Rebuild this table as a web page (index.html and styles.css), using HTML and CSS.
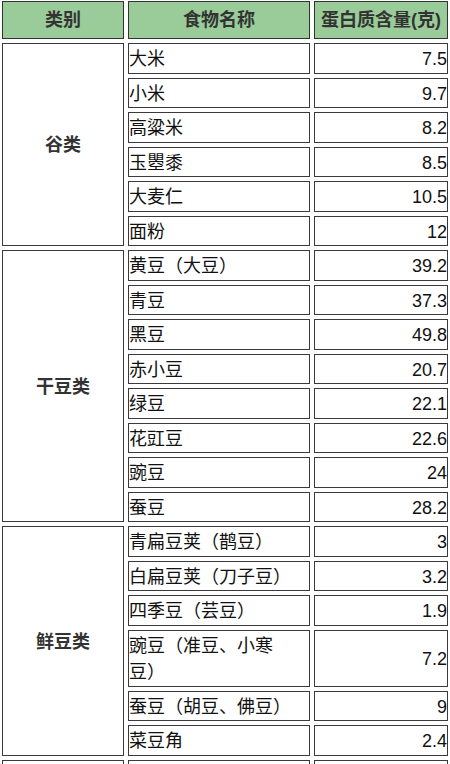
FILE: index.html
```html
<!DOCTYPE html>
<html lang="zh">
<head>
<meta charset="utf-8">
<title>蛋白质含量</title>
<link rel="stylesheet" href="styles.css">
</head>
<body>
<table class="protein">
  <thead>
    <tr><th class="h-cat">类别</th><th class="h-name">食物名称</th><th class="h-val">蛋白质含量(克)</th></tr>
  </thead>
  <tbody>
    <tr><td class="cat" rowspan="6">谷类</td><td class="name">大米</td><td class="val">7.5</td></tr>
    <tr><td class="name">小米</td><td class="val">9.7</td></tr>
    <tr><td class="name">高粱米</td><td class="val">8.2</td></tr>
    <tr><td class="name">玉瞾黍</td><td class="val">8.5</td></tr>
    <tr><td class="name">大麦仁</td><td class="val">10.5</td></tr>
    <tr><td class="name">面粉</td><td class="val">12</td></tr>
    <tr><td class="cat" rowspan="8">干豆类</td><td class="name">黄豆（大豆）</td><td class="val">39.2</td></tr>
    <tr><td class="name">青豆</td><td class="val">37.3</td></tr>
    <tr><td class="name">黑豆</td><td class="val">49.8</td></tr>
    <tr><td class="name">赤小豆</td><td class="val">20.7</td></tr>
    <tr><td class="name">绿豆</td><td class="val">22.1</td></tr>
    <tr><td class="name">花豇豆</td><td class="val">22.6</td></tr>
    <tr><td class="name">豌豆</td><td class="val">24</td></tr>
    <tr><td class="name">蚕豆</td><td class="val">28.2</td></tr>
    <tr><td class="cat" rowspan="6">鲜豆类</td><td class="name">青扁豆荚（鹊豆）</td><td class="val">3</td></tr>
    <tr><td class="name">白扁豆荚（刀子豆）</td><td class="val">3.2</td></tr>
    <tr><td class="name">四季豆（芸豆）</td><td class="val">1.9</td></tr>
    <tr><td class="name">豌豆（准豆、小寒豆）</td><td class="val">7.2</td></tr>
    <tr><td class="name">蚕豆（胡豆、佛豆）</td><td class="val">9</td></tr>
    <tr><td class="name">菜豆角</td><td class="val">2.4</td></tr>
    <tr class="next"><td class="cat"></td><td class="name"></td><td class="val"></td></tr>
  </tbody>
</table>
</body>
</html>
```
FILE: styles.css
```css
html, body {
  margin: 0;
  padding: 0;
  overflow: hidden;
  background: #ffffff;
}

.protein {
  border-collapse: separate;
  border-spacing: 4px;
  width: 454px;
  margin: -3px 0 0 -2px;
  font-family: "Liberation Sans", "Noto Sans CJK SC", sans-serif;
  font-size: 18px;
  color: #111;
  text-spacing-trim: space-all;
}

.protein th,
.protein td {
  box-sizing: border-box;
}

.h-cat { width: 122px; }
.h-name { width: 182px; }
.h-val { width: 134px; }

.protein th {
  height: 38px;
  padding: 0;
  background: #99cc99;
  border: 1px solid #333;
  color: #333;
  font-weight: bold;
  text-align: center;
  vertical-align: middle;
  line-height: 22px;
}

.protein td {
  border: 1px solid #3a3a3a;
  padding: 2px 0 0;
  line-height: 26.5px;
  vertical-align: middle;
}

.protein .next td {
  height: 30px;
}

.protein .name {
  padding-left: 0;
  padding-right: 4px;
  text-align: left;
}

.protein .val {
  text-align: right;
}

.protein .cat {
  text-align: center;
  font-weight: bold;
  color: #333;
}
```
